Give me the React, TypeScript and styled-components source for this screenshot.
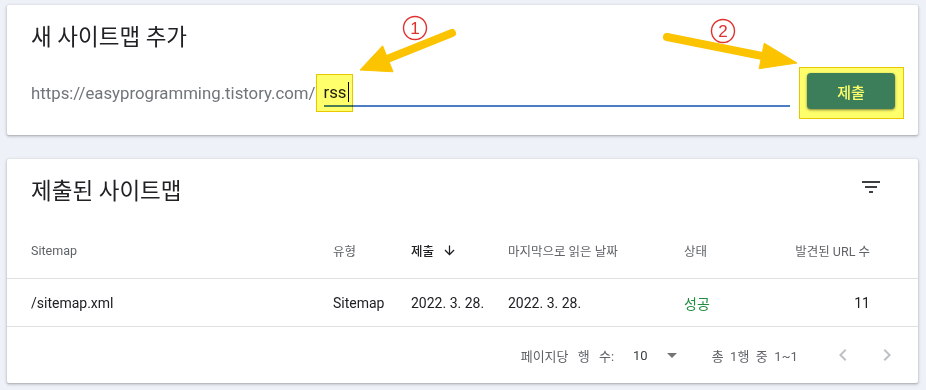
import styled, { createGlobalStyle } from 'styled-components';

const GlobalStyle = createGlobalStyle`
  body {
    margin: 0;
    background: #eef1f7;
    font-family: Roboto, 'Noto Sans CJK KR', sans-serif;
    color: #202124;
  }
`;

const Page = styled.div`
  position: relative;
  display: flex;
  flex-direction: column;
  gap: 24px;
  padding: 5px 8px 6px 7px;
`;

const Card = styled.section`
  position: relative;
  background: #fff;
  border-radius: 2px;
  box-shadow: 0 1px 2px rgba(60, 64, 67, 0.3), 0 1px 3px 1px rgba(60, 64, 67, 0.12);
`;

const AddCard = styled(Card)`
  padding: 16px 14px 22px 24px;
`;

const CardTitle = styled.h2`
  margin: 0;
  font-size: 22.5px;
  font-weight: 400;
  line-height: 32px;
  color: #202124;
`;

const FormRow = styled.div`
  display: flex;
  align-items: center;
  height: 44px;
  margin-top: 16px;
`;

const Prefix = styled.span`
  padding-top: 4px;
  margin-right: 8px;
  font-size: 16.8px;
  line-height: 24px;
  color: #70757a;
`;

const Field = styled.div`
  position: relative;
  flex: 1;
  display: flex;
  align-items: center;
  box-sizing: border-box;
  height: 32px;
  padding-top: 4px;
  margin-right: 9px;
  border-bottom: 2px solid #4a7dc4;
  font-size: 16.8px;
  line-height: 24px;
  color: #202124;
`;

const Caret = styled.span`
  display: inline-block;
  width: 1px;
  height: 20px;
  margin-left: 1px;
  background: #000;
`;

// marker highlight drawn over the screenshot, multiplied into what is under it
const Marker = styled.span`
  position: absolute;
  left: -8px;
  top: -1px;
  width: 37px;
  height: 38px;
  box-sizing: border-box;
  background: #ffff6c;
  border: 1.5px solid #e8c600;
  mix-blend-mode: multiply;
  pointer-events: none;
`;

const MarkedBox = styled.div`
  position: relative;
  margin-top: 4px;
  padding: 6px 9px 10px 8px;

  &::after {
    content: '';
    position: absolute;
    inset: 0;
    box-sizing: border-box;
    background: #ffff6c;
    border: 1.5px solid #e8c600;
    mix-blend-mode: multiply;
    pointer-events: none;
  }
`;

const SubmitButton = styled.button`
  display: block;
  width: 88px;
  height: 36px;
  border: none;
  border-radius: 4px;
  background: #3c7ed2;
  color: #fff;
  font-family: inherit;
  font-size: 15px;
  font-weight: 500;
  box-shadow: 0 1px 2px rgba(0, 0, 0, 0.35), 0 1px 3px 1px rgba(0, 0, 0, 0.12);
`;

const TitleBar = styled.div`
  display: flex;
  align-items: center;
  justify-content: space-between;
  height: 64px;
  padding: 0 35px 0 24px;
`;

const FilterIcon = styled.svg`
  width: 24px;
  height: 24px;
  margin-bottom: 8px;
  fill: #3c4043;
`;

const Row = styled.div<{ $head?: boolean }>`
  display: grid;
  grid-template-columns: 302px 78px 97px 176px 1fr auto;
  align-items: center;
  box-sizing: border-box;
  height: ${({ $head }) => ($head ? '56px' : '48px')};
  padding: 0 48px 0 24px;
  border-bottom: 1px solid #e0e0e0;
  font-size: ${({ $head }) => ($head ? '12.5px' : '14px')};
`;

type Tone = 'muted' | 'strong' | 'body' | 'success';

const Cell = styled.div<{ $tone?: Tone; $right?: boolean }>`
  display: flex;
  align-items: center;
  justify-content: ${({ $right }) => ($right ? 'flex-end' : 'flex-start')};
  white-space: nowrap;
  font-weight: ${({ $tone }) => ($tone === 'strong' ? 500 : 400)};
  color: ${({ $tone }) => {
    switch ($tone) {
      case 'muted':
        return '#5f6368';
      case 'success':
        return '#1e8e3e';
      default:
        return '#202124';
    }
  }};
`;

const SortIcon = styled.svg`
  width: 15px;
  height: 15px;
  margin-left: 8px;
  fill: #202124;
`;

const Footer = styled.div`
  display: flex;
  align-items: center;
  justify-content: flex-end;
  height: 56px;
  padding-right: 19px;
  font-size: 13px;
  color: #5f6368;
`;

const PerPage = styled.span`
  word-spacing: 6px;
  margin-right: 19px;
`;

const PageSize = styled.span`
  color: #3c4043;
  margin-right: 12px;
`;

const Total = styled.span`
  word-spacing: 3px;
  letter-spacing: 0.1px;
  margin-right: 33px;
`;

const NavIcon = styled.svg<{ $gap?: number; $tone?: string }>`
  width: 24px;
  height: 24px;
  margin-right: ${({ $gap }) => $gap || 0}px;
  fill: ${({ $tone }) => $tone || '#bdc1c6'};
`;

const Annotations = styled.svg`
  position: absolute;
  top: 0;
  left: 0;
  width: 926px;
  height: 150px;
  overflow: visible;
  pointer-events: none;
`;

type Pt = [number, number];

const Arrow = ({ from, to, head = 32, half = 14 }: { from: Pt; to: Pt; head?: number; half?: number }) => {
  const dx = to[0] - from[0];
  const dy = to[1] - from[1];
  const len = Math.hypot(dx, dy);
  const ux = dx / len;
  const uy = dy / len;
  const bx = to[0] - ux * head;
  const by = to[1] - uy * head;
  const nx = -uy;
  const ny = ux;
  const points = [to, [bx + nx * half, by + ny * half], [bx - nx * half, by - ny * half]]
    .map((p) => p.join(','))
    .join(' ');

  return (
    <g fill="#fcc400" stroke="#fcc400">
      <line x1={from[0]} y1={from[1]} x2={bx + ux * 2} y2={by + uy * 2} strokeWidth={8} strokeLinecap="round" />
      <polygon points={points} strokeWidth={1} strokeLinejoin="round" />
    </g>
  );
};

const StepBadge = ({ x, y, label }: { x: number; y: number; label: string }) => (
  <g>
    <circle cx={x} cy={y} r={11.5} fill="none" stroke="#e0312e" strokeWidth={1.4} />
    <text
      x={x}
      y={y + 6}
      textAnchor="middle"
      fontSize={17}
      fontFamily="'Liberation Sans', sans-serif"
      fill="#e0312e"
    >
      {label}
    </text>
  </g>
);

export default function App() {
  return (
    <>
      <GlobalStyle />
      <Page>
        <AddCard>
          <CardTitle>새 사이트맵 추가</CardTitle>
          <FormRow>
            <Prefix>https://easyprogramming.tistory.com/</Prefix>
            <Field>
              rss
              <Caret />
              <Marker />
            </Field>
            <MarkedBox>
              <SubmitButton>제출</SubmitButton>
            </MarkedBox>
          </FormRow>
        </AddCard>

        <Card>
          <TitleBar>
            <CardTitle>제출된 사이트맵</CardTitle>
            <FilterIcon viewBox="0 0 24 24">
              <path d="M10 18h4v-2h-4v2zM3 6v2h18V6H3zm3 7h12v-2H6v2z" />
            </FilterIcon>
          </TitleBar>

          <Row $head>
            <Cell $tone="muted">Sitemap</Cell>
            <Cell $tone="muted">유형</Cell>
            <Cell $tone="strong">
              제출
              <SortIcon viewBox="0 0 24 24">
                <path d="M20 12l-1.41-1.41L13 16.17V4h-2v12.17l-5.58-5.59L4 12l8 8 8-8z" />
              </SortIcon>
            </Cell>
            <Cell $tone="muted">마지막으로 읽은 날짜</Cell>
            <Cell $tone="muted">상태</Cell>
            <Cell $tone="muted" $right>
              발견된 URL 수
            </Cell>
          </Row>

          <Row>
            <Cell>/sitemap.xml</Cell>
            <Cell>Sitemap</Cell>
            <Cell>2022. 3. 28.</Cell>
            <Cell>2022. 3. 28.</Cell>
            <Cell $tone="success">성공</Cell>
            <Cell $right>11</Cell>
          </Row>

          <Footer>
            <PerPage>페이지당 행 수:</PerPage>
            <PageSize>10</PageSize>
            <NavIcon viewBox="0 0 24 24" $gap={28} $tone="#757575">
              <path d="M7 10l5 5 5-5z" />
            </NavIcon>
            <Total>총 1행 중 1~1</Total>
            <NavIcon viewBox="0 0 24 24" $gap={20}>
              <path d="M15.41 7.41L14 6l-6 6 6 6 1.41-1.41L10.83 12z" />
            </NavIcon>
            <NavIcon viewBox="0 0 24 24">
              <path d="M10 6L8.59 7.41 13.17 12l-4.58 4.59L10 18l6-6z" />
            </NavIcon>
          </Footer>
        </Card>

        <Annotations viewBox="0 0 926 150">
          <Arrow from={[452, 33]} to={[360, 70]} head={30} half={14} />
          <Arrow from={[667, 37]} to={[797, 63]} head={36} half={13} />
          <StepBadge x={415} y={28} label="1" />
          <StepBadge x={723} y={31} label="2" />
        </Annotations>
      </Page>
    </>
  );
}
